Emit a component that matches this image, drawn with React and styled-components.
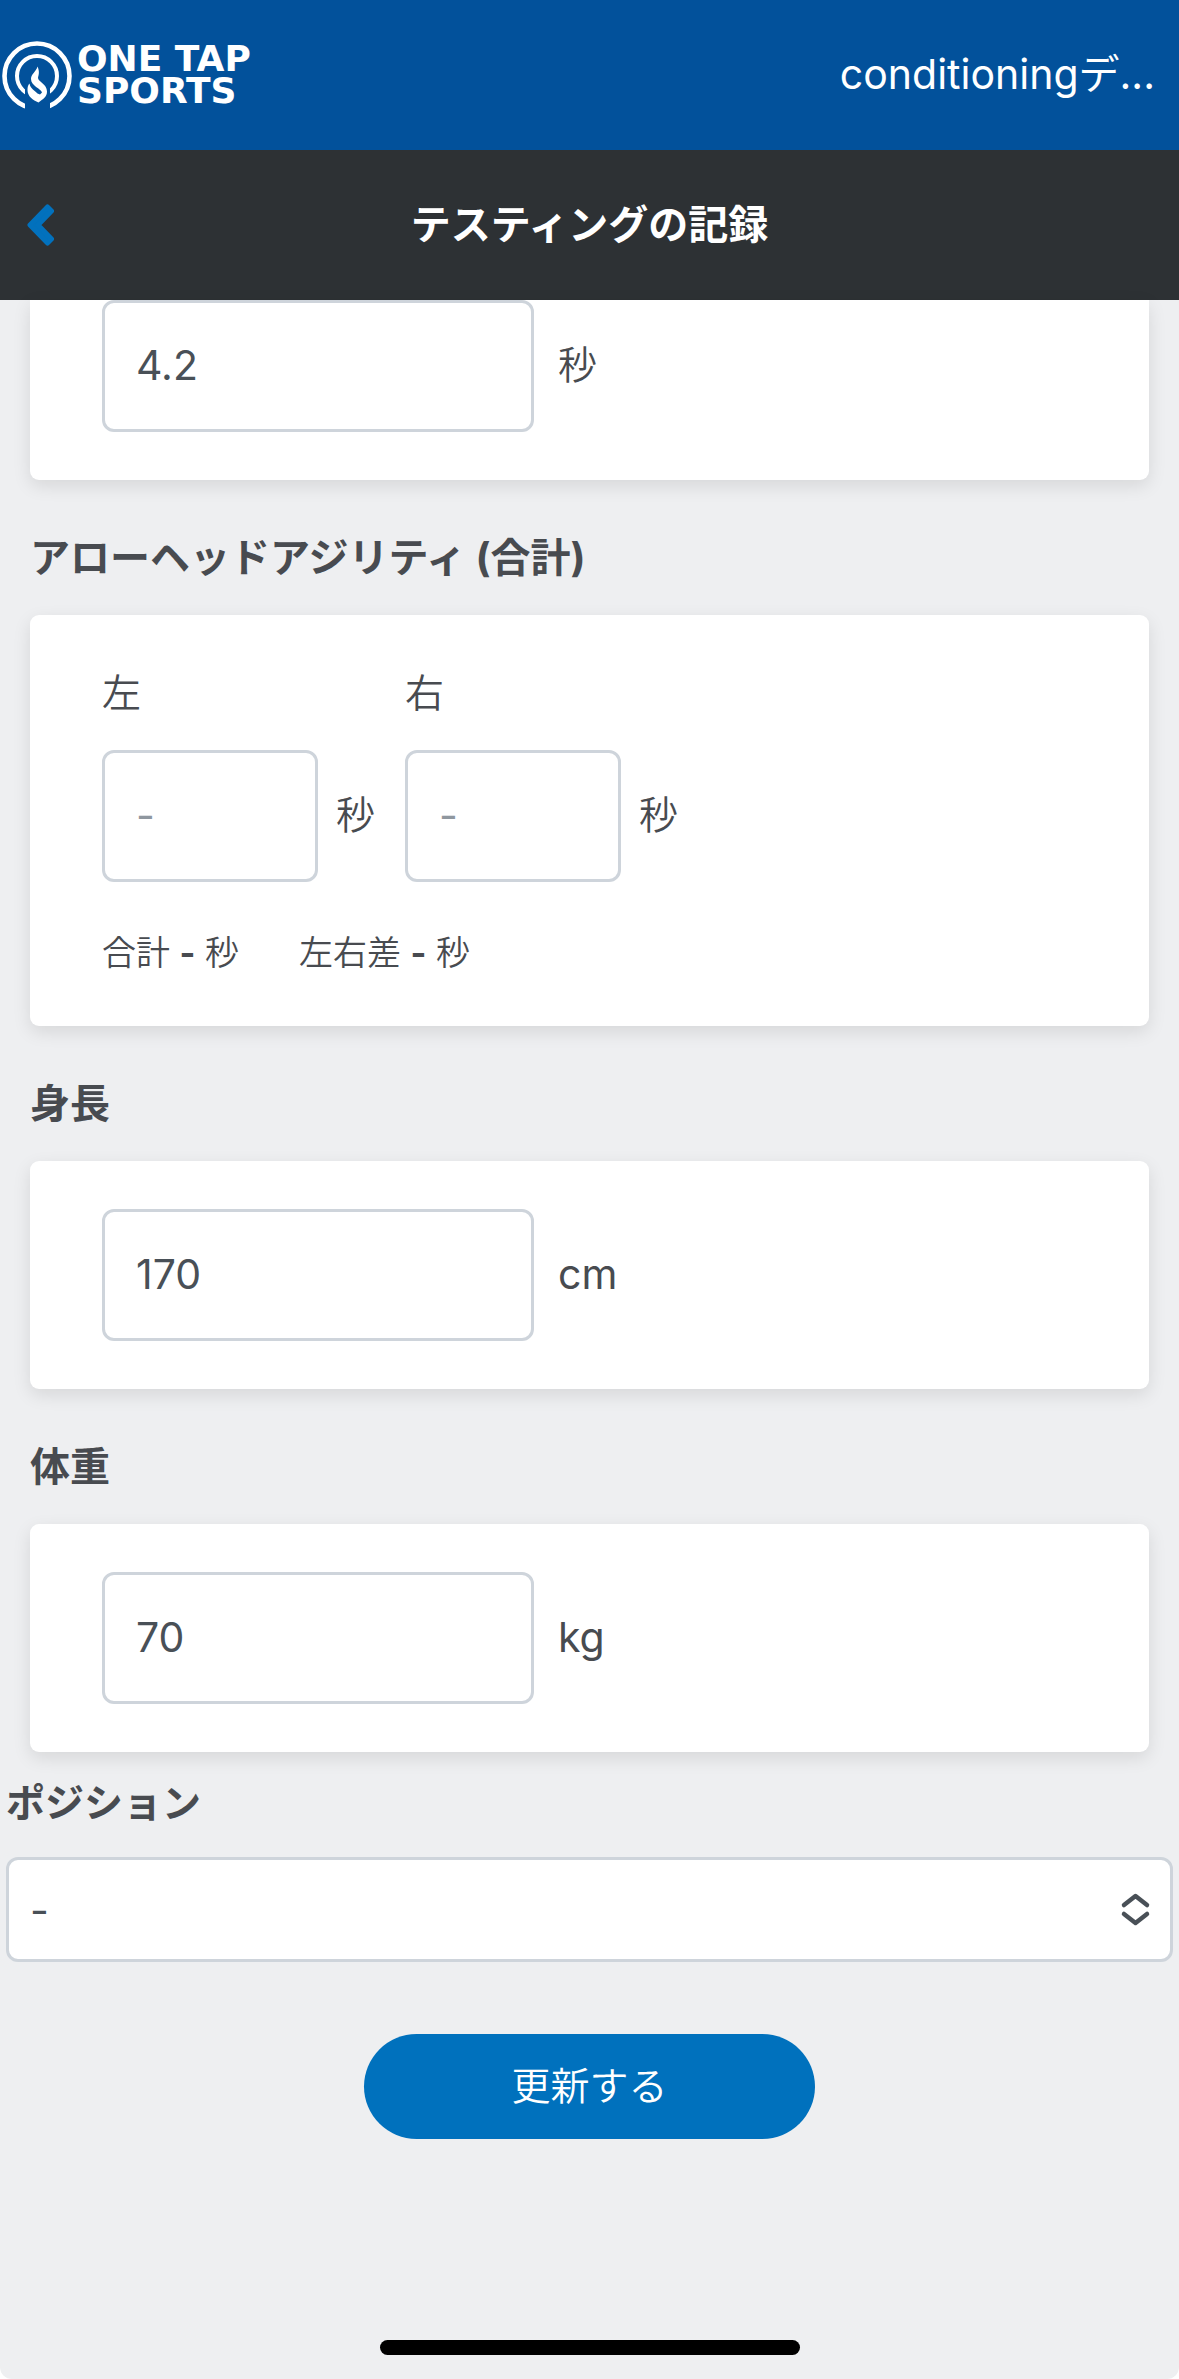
import React, { useState } from 'react'
import styled, { createGlobalStyle } from 'styled-components';

const GlobalStyle = createGlobalStyle`
  * {
    box-sizing: border-box;
  }
  body {
    margin: 0;
    background: #fff;
    color: #484b50;
    font-family: Inter, "Noto Sans CJK JP", sans-serif;
    font-size: 39px;
    font-weight: 350;
    line-height: 60px;
  }
  input, select, button {
    font: inherit;
    color: inherit;
  }
`;

const Page = styled.div`
  display: flex;
  flex-direction: column;
  min-height: 100vh;
  border-radius: 0 0 12px 12px;
  background: #eeeff1;
`;

const TopBar = styled.header`
  display: flex;
  align-items: center;
  justify-content: space-between;
  height: 150px;
  padding: 0 24px 0 0;
  background: #02519b;
  color: #fff;
`;

const LogoLink = styled.a`
  display: flex;
  align-items: center;
  gap: 3px;
  color: #fff;
  text-decoration: none;
`;

const LogoText = styled.span`
  font-family: "DejaVu Sans", sans-serif;
  font-size: 36px;
  font-weight: 700;
  line-height: 32px;
`;

const UserName = styled.span`
  padding-bottom: 2px;
  font-size: 41px;
  font-weight: 400;
`;

const TitleBar = styled.div`
  display: grid;
  grid-template-columns: 1fr auto 1fr;
  align-items: center;
  height: 150px;
  background: #2d3134;
`;

const BackButton = styled.button`
  display: flex;
  justify-self: start;
  padding: 0 27px;
  border: 0;
  background: none;
  color: #0271bd;
`;

const Title = styled.h1`
  margin: 0;
  color: #fff;
  font-size: 40px;
  font-weight: 700;
`;

const Records = styled.div`
  padding: 0 30px;
`;

const Card = styled.section`
  padding: ${(props) => (props.$cut ? '0' : '48px')} 72px 48px;
  border-radius: ${(props) => (props.$cut ? '0 0 9px 9px' : '9px')};
  background: #fff;
  box-shadow: 0 6px 18px rgba(0, 0, 0, 0.1);
`;

const Heading = styled.h2`
  margin: 0;
  padding: 48px 0 27px;
  font-size: 40px;
  font-weight: 700;
`;

const Row = styled.div`
  display: flex;
  align-items: center;
  gap: ${(props) => props.$gap};
`;

const Sides = styled.div`
  display: flex;
  gap: 30px;
`;

const SideLabel = styled.label`
  display: block;
  margin-bottom: 27px;
`;

const ValueInput = styled.input`
  width: ${(props) => props.$width};
  height: 132px;
  padding: 0 31px 2px;
  border: 3px solid #ced4db;
  border-radius: 12px;
  background: #fff;
  color: #495057;
  font-size: 41px;
  font-weight: 400;
  &::placeholder {
    color: #8f979f;
    opacity: 1;
  }
`;

const Unit = styled.span`
  padding-bottom: 2px;
  font-size: ${(props) => (props.$latin ? '41px' : '39px')};
  font-weight: ${(props) => (props.$latin ? 400 : 350)};
`;

const Totals = styled.div`
  display: flex;
  gap: 60px;
  margin-top: 45px;
  font-size: 34px;
  line-height: 51px;
  b {
    font-weight: 700;
  }
`;

const Position = styled.div`
  padding: 21px 6px 0;
`;

const PositionLabel = styled.label`
  display: block;
  margin-bottom: 24px;
  font-weight: 700;
`;

const SelectBox = styled.div`
  position: relative;
  svg {
    position: absolute;
    top: 35px;
    right: 22px;
    pointer-events: none;
  }
`;

const Select = styled.select`
  display: block;
  width: 100%;
  height: 105px;
  padding: 0 21px;
  border: 3px solid #ced4db;
  border-radius: 12px;
  background: #fff;
  color: #495057;
  font-size: 41px;
  font-weight: 400;
  appearance: none;
`;

const SubmitButton = styled.button`
  align-self: center;
  width: 451px;
  height: 105px;
  margin: 72px 0;
  padding: 0 0 2px;
  border: 0;
  border-radius: 53px;
  background: #0071bd;
  color: #fff;
`;

const HomeBar = styled.div`
  align-self: center;
  width: 420px;
  height: 15px;
  margin: auto 0 24px;
  border-radius: 9px;
  background: #000;
`;

function Logo() {
    return (
        <LogoLink href="#" aria-label="ONE TAP SPORTS">
            <svg width="74" height="72" viewBox="0 0 74 72">
                <clipPath id="rings">
                    <path d="M0 0 H74 V72 H50 V37 H25 V72 H0 Z" />
                </clipPath>
                <g clipPath="url(#rings)" fill="none" stroke="#fff">
                    <circle cx="37" cy="37" r="32.5" strokeWidth="4.6" />
                    <circle cx="37" cy="37" r="20" strokeWidth="4" />
                </g>
                <path
                    d="M37.5 27.5 C40 33 38.5 36 38 39 C38.5 43 47 45 47 52.5 C47 58 43 60 38.5 63.5 C33 61 27.5 57.5 27.5 51 C27.5 48 28 46 29.5 44.5 C30.5 50 35 51.5 37.5 54.5 L40 55.5 L42 53.5 C41 49.5 31 47 31 40 C31 35 36 33 37.5 27.5 Z"
                    fill="#fff"
                />
            </svg>
            <LogoText>ONE TAP<br />SPORTS</LogoText>
        </LogoLink>
    )
}

function SingleField({ id, label, value, unit, latin }) {
    const [current, setCurrent] = useState(value);

    return (
        <Row $gap="24px">
            <ValueInput
                id={id}
                $width="432px"
                aria-label={label}
                inputMode="decimal"
                value={current}
                onChange={(e) => setCurrent(e.target.value)}
            />
            <Unit $latin={latin}>{unit}</Unit>
        </Row>
    )
}

function SideField({ id, label }) {
    return (
        <div>
            <SideLabel htmlFor={id}>{label}</SideLabel>
            <Row $gap="18px">
                <ValueInput id={id} $width="216px" placeholder="-" inputMode="decimal" />
                <Unit>秒</Unit>
            </Row>
        </div>
    )
}

export default function App() {
    return (
        <Page>
            <GlobalStyle />
            <TopBar>
                <Logo />
                <UserName>conditioningデ...</UserName>
            </TopBar>
            <TitleBar>
                <BackButton type="button" aria-label="戻る">
                    <svg width="27" height="42" viewBox="0 0 27 42" fill="currentColor" stroke="currentColor" strokeWidth="5" strokeLinejoin="round">
                        <path d="M3 21 L20.5 3 L24.5 7 L11 21 L24.5 35 L20.5 39 Z" />
                    </svg>
                </BackButton>
                <Title>テスティングの記録</Title>
            </TitleBar>
            <Records>
                <Card $cut>
                    <SingleField id="time" label="タイム" value="4.2" unit="秒" />
                </Card>
                <Heading>アローヘッドアジリティ (合計)</Heading>
                <Card>
                    <Sides>
                        <SideField id="left" label="左" />
                        <SideField id="right" label="右" />
                    </Sides>
                    <Totals>
                        <span>合計 <b>-</b> 秒</span>
                        <span>左右差 <b>-</b> 秒</span>
                    </Totals>
                </Card>
                <Heading>身長</Heading>
                <Card>
                    <SingleField id="height" label="身長" value="170" unit="cm" latin />
                </Card>
                <Heading>体重</Heading>
                <Card>
                    <SingleField id="weight" label="体重" value="70" unit="kg" latin />
                </Card>
            </Records>
            <Position>
                <PositionLabel htmlFor="position">ポジション</PositionLabel>
                <SelectBox>
                    <Select id="position" defaultValue="">
                        <option value="">-</option>
                    </Select>
                    <svg width="31" height="35" viewBox="0 0 31 35" fill="none" stroke="#495057" strokeWidth="4.5" strokeLinecap="round" strokeLinejoin="round">
                        <path d="M4 13 L15.5 4 L27 13" />
                        <path d="M4 22 L15.5 31 L27 22" />
                    </svg>
                </SelectBox>
            </Position>
            <SubmitButton type="button">更新する</SubmitButton>
            <HomeBar />
        </Page>
    )
}
